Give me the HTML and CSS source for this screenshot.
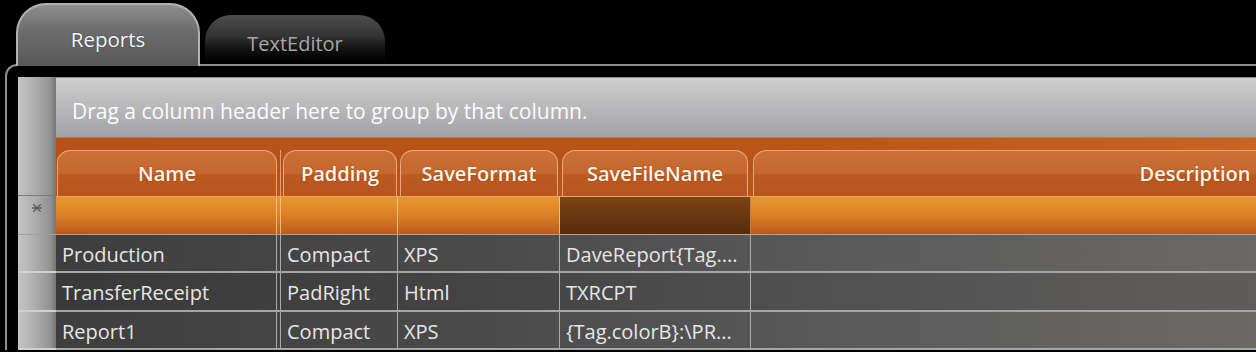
FILE: index.html
```html
<!DOCTYPE html>
<html>
<head>
<meta charset="utf-8">
<link rel="stylesheet" href="styles.css">
</head>
<body>
<div class="tabs">
  <div class="tab tab-active">Reports</div>
  <div class="tab tab-idle">TextEditor</div>
</div>
<div class="frame">
  <div class="grid">
    <div class="row row-group">
      <div class="rh"></div>
      <div class="group">Drag a column header here to group by that column.</div>
    </div>
    <div class="row row-head">
      <div class="rh rh-head"></div>
      <div class="hcells">
        <div class="hc w-name"><div class="ht">Name</div></div>
        <div class="split hsplit"></div>
        <div class="hc w-pad"><div class="ht">Padding</div></div>
        <div class="hc w-fmt"><div class="ht">SaveFormat</div></div>
        <div class="hc w-file"><div class="ht">SaveFileName</div></div>
        <div class="hc w-desc"><div class="ht">Description</div></div>
      </div>
    </div>
    <div class="row row-new">
      <div class="rh rh-new">
        <svg class="star" width="12" height="12" viewBox="0 0 12 12"><path d="M1 6H11M2.3 2.3L9.7 9.7M2.3 9.7L9.7 2.3" stroke="#5a5a5a" stroke-width="1.3" fill="none"/></svg>
      </div>
      <div class="ncells">
        <div class="nc w-name"></div>
        <div class="split nsplit"></div>
        <div class="nc w-pad"></div>
        <div class="nc w-fmt"></div>
        <div class="nc w-file current"></div>
        <div class="nc w-desc"></div>
      </div>
    </div>
    <div class="row drow">
      <div class="rh rh-data"></div>
      <div class="dcells">
        <div class="c w-name">Production</div>
        <div class="split dsplit"></div>
        <div class="c w-pad">Compact</div>
        <div class="c w-fmt">XPS</div>
        <div class="c w-file">DaveReport{Tag....</div>
        <div class="c w-desc"></div>
      </div>
    </div>
    <div class="row drow alt">
      <div class="rh rh-data"></div>
      <div class="dcells">
        <div class="c w-name">TransferReceipt</div>
        <div class="split dsplit"></div>
        <div class="c w-pad">PadRight</div>
        <div class="c w-fmt">Html</div>
        <div class="c w-file">TXRCPT</div>
        <div class="c w-desc"></div>
      </div>
    </div>
    <div class="row drow">
      <div class="rh rh-data"></div>
      <div class="dcells">
        <div class="c w-name">Report1</div>
        <div class="split dsplit"></div>
        <div class="c w-pad">Compact</div>
        <div class="c w-fmt">XPS</div>
        <div class="c w-file">{Tag.colorB}:\PR...</div>
        <div class="c w-desc"></div>
      </div>
    </div>
  </div>
</div>
</body>
</html>
```
FILE: styles.css
```css
html, body {
  margin: 0;
  padding: 0;
}
body {
  background: #000;
  width: 1256px;
  height: 352px;
  overflow: hidden;
  font-family: "Open Sans", "Noto Sans", sans-serif;
}

/* ---------- tabs ---------- */
.tabs {
  display: flex;
  align-items: flex-end;
  height: 64px;
  padding-left: 16px;
  gap: 5px;
}
.tab {
  box-sizing: border-box;
  text-align: center;
  font-size: 20px;
  line-height: 26px;
}
.tab-active {
  width: 184px;
  height: 63px;
  margin-bottom: -2px;
  border: 2px solid #b2b2b2;
  border-bottom: 0;
  border-radius: 30px 30px 0 0;
  background: linear-gradient(#8e8e8e, #6e6e6e 40%, #585858);
  color: #f6f6f6;
  padding-top: 21px;
  font-size: 20.5px;
  position: relative;
  z-index: 1;
  text-shadow: 0 0 2px rgba(0,0,0,.4);
}
.tab-idle {
  width: 180px;
  height: 47px;
  margin-bottom: 2px;
  border-radius: 26px 26px 0 0;
  background: linear-gradient(#4e4e4e, #333 45%, #141414 70%, #000);
  color: #a6a6a6;
  padding-top: 16px;
}

/* ---------- frame ---------- */
.frame {
  margin-left: 5px;
  border-top: 2px solid #8e8e8e;
  border-left: 2px solid #8e8e8e;
  border-top-left-radius: 12px;
  padding: 11px 0 0 11px;
}
.grid {
  display: flex;
  flex-direction: column;
}
.row {
  display: flex;
}
.rh {
  width: 38px;
  flex-shrink: 0;
  box-sizing: border-box;
  background: linear-gradient(90deg, #c4c4c4, #b0b0b0 40%, #929292 85%, #747474);
}

/* column widths */
.w-name { width: 221px; }
.split { width: 4px; }
.w-pad { width: 117px; }
.w-fmt { width: 162px; }
.w-file { width: 191px; }
.w-desc { width: 888px; }
.hc, .nc, .c, .split {
  flex-shrink: 0;
  box-sizing: border-box;
}

/* ---------- group panel ---------- */
.row-group { height: 60px; }
.group {
  flex: 1;
  box-sizing: border-box;
  border-top: 1px solid #8c8c8c;
  background: linear-gradient(#cecece, #b6b6b8 55%, #a2a2a6);
  color: #fbfbfb;
  font-size: 21px;
  line-height: 26px;
  padding: 20px 0 0 16px;
  white-space: nowrap;
}

/* ---------- header ---------- */
.row-head { height: 59px; }
.rh-head { border-bottom: 1px solid #7a7a7a; }
.hcells {
  flex: 1;
  min-width: 0;
  overflow: hidden;
  display: flex;
  box-sizing: border-box;
  padding-top: 12px;
  background: linear-gradient(90deg, #b5521a, #b85519 60%, #c76424);
  border-top: 1px solid #c27a4e;
}
.hc {
  display: flex;
  padding: 0 2px;
}
.hc.w-name { padding: 0 0 0 1px; }
.hc.w-pad { padding: 0 1px 0 2px; }
.hc.w-file { padding: 0 3px 0 2px; }
.hsplit { border-right: 1px solid rgba(245, 175, 125, .8); }
.ht {
  flex: 1;
  box-sizing: border-box;
  border: 1px solid rgba(250, 185, 135, .8);
  border-bottom: 0;
  border-radius: 13px 13px 0 0;
  background: linear-gradient(#cc7038, #c5672f 50%, #bb5a21 53%, #b75520);
  color: #fff4e8;
  text-align: center;
  font-size: 20px;
  font-weight: 600;
  line-height: 26px;
  padding-top: 10px;
  white-space: nowrap;
  text-shadow: 0 0 2px rgba(120, 40, 0, .5);
}

/* ---------- new row ---------- */
.row-new { height: 39px; }
.rh-new {
  display: flex;
  justify-content: center;
  padding-top: 6px;
  border-bottom: 1px solid #a0a0a0;
}
.star { display: block; }
.ncells {
  flex: 1;
  min-width: 0;
  overflow: hidden;
  display: flex;
  box-sizing: border-box;
  border-top: 1px solid #eaa265;
  border-bottom: 1px solid #b2a594;
  background: linear-gradient(#e8962f, #dd8426 45%, #c4651f 85%, #b9581e);
}
.nc { border-right: 1px solid rgba(250, 195, 140, .85); }
.nsplit { border-right: 1px solid rgba(250, 195, 140, .85); }
.nc.current {
  background: linear-gradient(#7c4315, #673510 60%, #582b0b);
  border-right-color: rgba(200, 150, 110, .8);
}

/* ---------- data rows ---------- */
.drow { height: 38px; }
.drow.alt { height: 39px; }
.rh-data { border-bottom: 2px solid #d0d0d0; }
.dcells {
  flex: 1;
  min-width: 0;
  overflow: hidden;
  display: flex;
  box-sizing: border-box;
  border-bottom: 2px solid #a6a6a6;
  background: linear-gradient(90deg, #3e3e3e, #4a4a4a 35%, #5c5c5c 70%, #6b6966);
}
.drow.alt .dcells {
  background: linear-gradient(90deg, #393939, #444 35%, #535353 70%, #5f5d5b);
}
.c {
  border-right: 1px solid #a9a9a9;
  color: #e6e6e6;
  font-size: 20px;
  line-height: 26px;
  padding: 7px 0 0 6px;
  white-space: nowrap;
  overflow: hidden;
}
.c.w-desc { border-right: 0; }
.dsplit { border-right: 1px solid #a9a9a9; }
```
